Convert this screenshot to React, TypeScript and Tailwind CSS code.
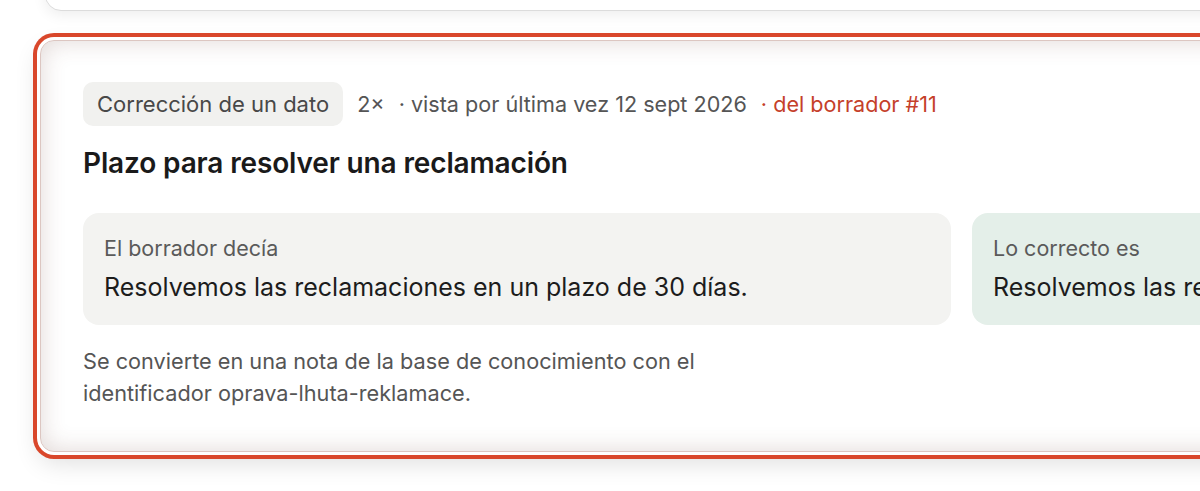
export default function App() {
  return (
    <div className="w-[1200px] h-[491px] overflow-hidden bg-white font-['Inter','Noto_Sans',sans-serif]">
      <div className="flex flex-col">
        <div className="ml-[45px] -mt-[50px] h-[61px] w-[1400px] shrink-0 rounded-2xl border border-[#dcdcdc] bg-white shadow-[0_4px_14px_rgba(0,0,0,0.07)]" />
        <div className="ml-[40px] mt-[29px] w-[1850px] shrink-0 rounded-[14px] border border-[#dcc6c1] bg-white px-[42px] pt-[41px] pb-[42px] shadow-[0_0_0_3px_#fff,0_0_0_7px_#d9472b,0_10px_26px_rgba(0,0,0,0.14),inset_0_0_24px_rgba(100,55,45,0.2)]">
          <div className="flex items-center gap-[14px] text-[21.6px] text-[#555]">
            <span className="h-[44px] flex items-center rounded-[10px] bg-[#f1f1ef] px-[14px] text-[22px] text-[#484848]">Corrección de un dato</span>
            <span>2×</span>
            <span>· vista por última vez 12 sept 2026</span>
            <span className="text-[#c5402a]">· del borrador #11</span>
          </div>
          <h2 className="mt-[19px] text-[28px] leading-[36px] font-semibold text-[#1a1a1a] tracking-[-0.005em]">Plazo para resolver una reclamación</h2>
          <div className="mt-[32px] grid grid-cols-[868px_868px] gap-[21px]">
            <div className="rounded-[16px] bg-[#f3f3f1] px-[21px] pt-[21px] pb-[22px]">
              <div className="text-[21.5px] leading-[28px] text-[#5a5a5a]">El borrador decía</div>
              <div className="mt-[9px] text-[25px] leading-[32px] text-[#1c1c1c]">Resolvemos las reclamaciones en un plazo de 30 días.</div>
            </div>
            <div className="rounded-[16px] bg-[#e4efe9] px-[21px] pt-[21px] pb-[22px]">
              <div className="text-[21.5px] leading-[28px] text-[#5a5a5a]">Lo correcto es</div>
              <div className="mt-[9px] text-[25px] leading-[32px] text-[#1c1c1c]">Resolvemos las reclamaciones en un plazo de 15 días.</div>
            </div>
          </div>
          <p className="mt-[20px] w-[660px] text-[21.7px] leading-[32px] text-[#555]">
            Se convierte en una nota de la base de conocimiento con el identificador oprava-lhuta-reklamace.
          </p>
        </div>
      </div>
    </div>
  );
}
